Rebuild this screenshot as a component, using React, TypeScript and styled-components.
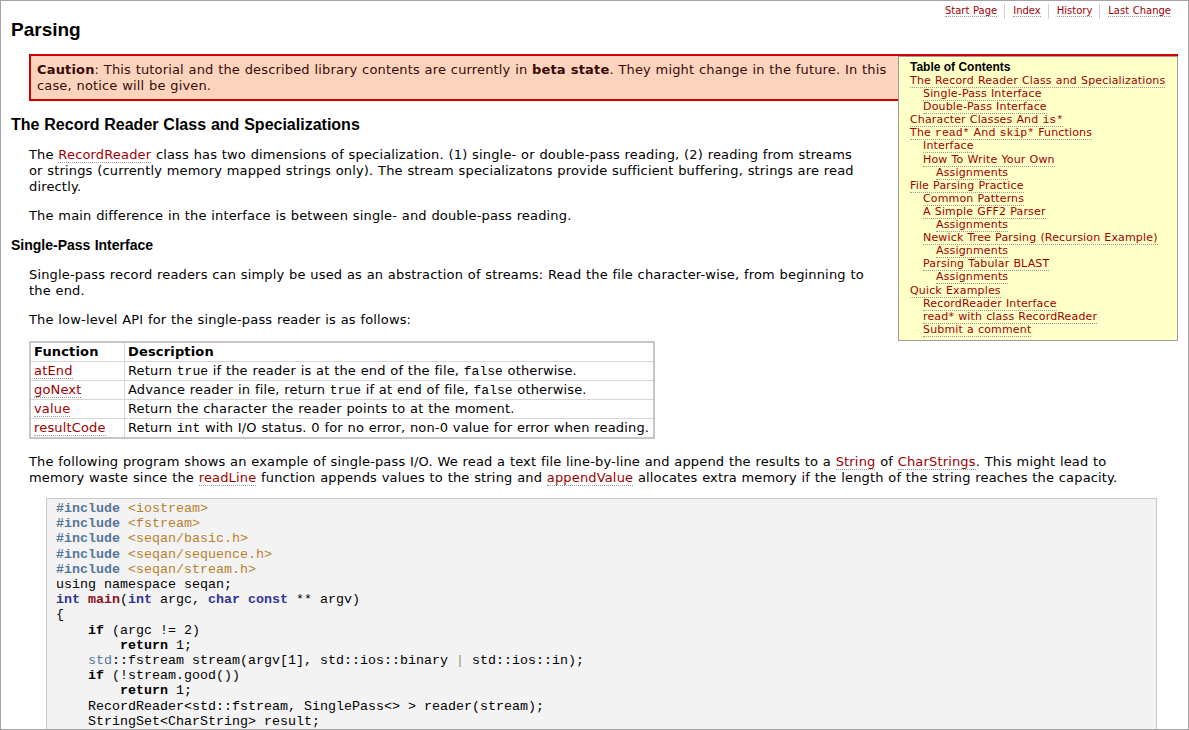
import React from "react";
import styled, { createGlobalStyle } from "styled-components";

const GlobalStyle = createGlobalStyle`
  html, body {
    margin: 0;
    padding: 0;
    background: #fff;
  }
  body {
    font-family: "DejaVu Sans", Verdana, sans-serif;
    font-size: 13px;
    color: #000;
  }
`;

type Kind = "n" | "pp" | "str" | "ty" | "fn" | "kw" | "ns" | "op";

const tokenColors: Record<Kind, string> = {
  n: "#000",
  pp: "#557799",
  str: "#b8812f",
  ty: "#333399",
  fn: "#8b1020",
  kw: "#000",
  ns: "#557799",
  op: "#a09070",
};

const boldKinds: Kind[] = ["pp", "ty", "fn", "kw"];

export default function App() {
  return (
    <>
      <GlobalStyle />
      <Frame>
        <Header>
          <Nav>
            <NavItem>
              <Link href="#">Start Page</Link>
            </NavItem>
            <NavItem>
              <Link href="#">Index</Link>
            </NavItem>
            <NavItem>
              <Link href="#">History</Link>
            </NavItem>
            <NavItem>
              <Link href="#">Last Change</Link>
            </NavItem>
          </Nav>
        </Header>
        <Title>Parsing</Title>
        <Content>
          <Toc>
            <TocTitle>Table of Contents</TocTitle>
            {tocItems.map((item, i) => (
              <TocRow key={i} $level={item.level}>
                <Link href="#">{item.label}</Link>
              </TocRow>
            ))}
          </Toc>
          <Caution>
            <strong>Caution</strong>: This tutorial and the described library
            contents are currently in <strong>beta state</strong>. They might
            change in the future. In this case, notice will be given.
          </Caution>
          <H2>The Record Reader Class and Specializations</H2>
          <Indent $narrow>
            <P>
              The <Link href="#">RecordReader</Link> class has two dimensions
              of specialization. (1) single- or double-pass reading, (2)
              reading from streams or strings (currently memory mapped strings
              only). The stream specializatons provide sufficient buffering,
              strings are read directly.
            </P>
            <P>
              The main difference in the interface is between single- and
              double-pass reading.
            </P>
          </Indent>
          <H3>Single-Pass Interface</H3>
          <Indent $narrow>
            <P>
              Single-pass record readers can simply be used as an abstraction
              of streams: Read the file character-wise, from beginning to the
              end.
            </P>
            <P>The low-level API for the single-pass reader is as follows:</P>
            <Table>
              <thead>
                <tr>
                  <Th $first>Function</Th>
                  <Th>Description</Th>
                </tr>
              </thead>
              <tbody>
                {functions.map((f) => (
                  <tr key={f.name}>
                    <Td>
                      <Link href="#">{f.name}</Link>
                    </Td>
                    <Td>{f.desc}</Td>
                  </tr>
                ))}
              </tbody>
            </Table>
          </Indent>
          <Indent>
            <P $gap={15}>
              The following program shows an example of single-pass I/O. We
              read a text file line-by-line and append the results to a{" "}
              <Link href="#">String</Link> of{" "}
              <Link href="#">CharStrings</Link>. This might lead to memory
              waste since the <Link href="#">readLine</Link> function appends
              values to the string and <Link href="#">appendValue</Link>{" "}
              allocates extra memory if the length of the string reaches the
              capacity.
            </P>
            <CodeBlock>
              {code.map((line, i) => (
                <CodeLine key={i}>
                  {line.map(([kind, text], j) => (
                    <Token key={j} $kind={kind}>
                      {text}
                    </Token>
                  ))}
                </CodeLine>
              ))}
            </CodeBlock>
          </Indent>
        </Content>
      </Frame>
    </>
  );
}

const Frame = styled.div`
  width: 1189px;
  height: 730px;
  box-sizing: border-box;
  border: 1px solid #a3a3a3;
  overflow: hidden;
  background: #fff;
  word-spacing: 0.4px;
  letter-spacing: 0.16px;
`;

const Header = styled.div`
  height: 18px;
  display: flex;
  justify-content: flex-end;
  padding: 3px 10px 0 0;
  box-sizing: border-box;
`;

const Nav = styled.ul`
  display: flex;
  list-style: none;
  margin: 0;
  padding: 0;
  font-size: 10px;
  line-height: 13px;
  letter-spacing: 0;
`;

const NavItem = styled.li`
  padding: 0 7px 0 8px;
  & + & {
    border-left: 1px solid #d0d0d0;
  }
`;

const Link = styled.a`
  color: #a00000;
  text-decoration: none;
  border-bottom: 1px dotted #9a9a9a;
`;

const Title = styled.h1`
  margin: 0;
  padding-left: 10px;
  font-family: "Liberation Sans", Arial, sans-serif;
  font-size: 19px;
  line-height: 22px;
  font-weight: bold;
  letter-spacing: 0;
`;

const Content = styled.div`
  display: flow-root;
  padding: 0 10px;
`;

const Toc = styled.div`
  float: right;
  width: 280px;
  box-sizing: border-box;
  margin: 15px 0 10px 6px;
  padding: 3px 8px 4px 11px;
  border: 1px solid #9c9c9c;
  background: #ffffc8;
  font-size: 11px;
  line-height: 13.1px;
`;

const TocTitle = styled.div`
  font-family: "Liberation Sans", Arial, sans-serif;
  font-size: 12px;
  line-height: 14px;
  font-weight: bold;
  word-spacing: 0;
  letter-spacing: 0;
`;

const TocRow = styled.div<{ $level: number }>`
  padding-left: ${({ $level }) => ($level - 1) * 13}px;
  white-space: nowrap;
`;

const TocMono = styled.span`
  font-family: "Liberation Mono", "Courier New", monospace;
  font-size: 11.5px;
  word-spacing: 0;
  letter-spacing: 0;
  line-height: 11px;
`;

const Caution = styled.div`
  margin: 13px 0 0 18px;
  padding: 6px 6px 5px;
  border: 2px solid #cc0000;
  background: #fcd4bd;
  color: #3a0a0a;
  line-height: 16px;
`;

const H2 = styled.h2`
  margin: 14px 0 0;
  font-family: "Liberation Sans", Arial, sans-serif;
  font-size: 16px;
  line-height: 19px;
  font-weight: bold;
  letter-spacing: 0;
`;

const H3 = styled.h3`
  margin: 13px 0 0;
  font-family: "Liberation Sans", Arial, sans-serif;
  font-size: 14px;
  line-height: 17px;
  font-weight: bold;
  letter-spacing: 0;
`;

const Indent = styled.div<{ $narrow?: boolean }>`
  margin-left: 18px;
  margin-right: ${({ $narrow }) => ($narrow ? "310px" : "21px")};
`;

const P = styled.p<{ $gap?: number }>`
  margin: ${({ $gap }) => $gap ?? 13}px 0 0;
  line-height: 16px;
`;

const Mono = styled.code`
  font-family: "Liberation Mono", "Courier New", monospace;
  font-size: 13px;
  word-spacing: 0;
  letter-spacing: 0;
  line-height: 12px;
`;

const Table = styled.table`
  margin-top: 13px;
  border-collapse: collapse;
  border: 2px solid #c6c6c6;
  line-height: 16px;
`;

const Th = styled.th<{ $first?: boolean }>`
  text-align: left;
  font-weight: bold;
  padding: 1px 4px 1px 3px;
  border: 1px solid #d6d6d6;
  width: ${({ $first }) => ($first ? "86px" : "auto")};
`;

const Td = styled.td`
  padding: 1px 4px 1px 3px;
  border: 1px solid #d6d6d6;
`;

const CodeBlock = styled.pre`
  margin: 12px 0 0 17px;
  padding: 2px 9px;
  border: 1px solid #c8c8c8;
  background: #f3f3f3;
  font-family: "Liberation Mono", "Courier New", monospace;
  font-size: 13.33px;
  line-height: 15.2px;
  word-spacing: 0;
  letter-spacing: 0;
`;

const CodeLine = styled.div`
  white-space: pre;
  min-height: 15.2px;
`;

const Token = styled.span<{ $kind: Kind }>`
  color: ${({ $kind }) => tokenColors[$kind]};
  font-weight: ${({ $kind }) => (boldKinds.includes($kind) ? "bold" : "normal")};
`;

const code: Array<Array<[Kind, string]>> = [
  [["pp", "#include"], ["n", " "], ["str", "<iostream>"]],
  [["pp", "#include"], ["n", " "], ["str", "<fstream>"]],
  [["pp", "#include"], ["n", " "], ["str", "<seqan/basic.h>"]],
  [["pp", "#include"], ["n", " "], ["str", "<seqan/sequence.h>"]],
  [["pp", "#include"], ["n", " "], ["str", "<seqan/stream.h>"]],
  [["n", "using namespace seqan;"]],
  [
    ["ty", "int"],
    ["n", " "],
    ["fn", "main"],
    ["n", "("],
    ["ty", "int"],
    ["n", " argc, "],
    ["ty", "char"],
    ["n", " "],
    ["ty", "const"],
    ["n", " ** argv)"],
  ],
  [["n", "{"]],
  [["n", "    "], ["kw", "if"], ["n", " (argc != 2)"]],
  [["n", "        "], ["kw", "return"], ["n", " 1;"]],
  [
    ["n", "    "],
    ["ns", "std"],
    ["n", "::fstream stream(argv[1], std::ios::binary "],
    ["op", "|"],
    ["n", " std::ios::in);"],
  ],
  [["n", "    "], ["kw", "if"], ["n", " (!stream.good())"]],
  [["n", "        "], ["kw", "return"], ["n", " 1;"]],
  [["n", "    RecordReader<std::fstream, SinglePass<> > reader(stream);"]],
  [["n", "    StringSet<CharString> result;"]],
  [["n", ""]],
  [["n", "    CharString buffer;"]],
  [["n", "    "], ["kw", "while"], ["n", " (!atEnd(reader))"]],
];

type TocItem = { level: number; label: React.ReactNode };

const tocItems: TocItem[] = [
  { level: 1, label: "The Record Reader Class and Specializations" },
  { level: 2, label: "Single-Pass Interface" },
  { level: 2, label: "Double-Pass Interface" },
  {
    level: 1,
    label: (
      <>
        Character Classes And <TocMono>is*</TocMono>
      </>
    ),
  },
  {
    level: 1,
    label: (
      <>
        The <TocMono>read*</TocMono> And <TocMono>skip*</TocMono> Functions
      </>
    ),
  },
  { level: 2, label: "Interface" },
  { level: 2, label: "How To Write Your Own" },
  { level: 3, label: "Assignments" },
  { level: 1, label: "File Parsing Practice" },
  { level: 2, label: "Common Patterns" },
  { level: 2, label: "A Simple GFF2 Parser" },
  { level: 3, label: "Assignments" },
  { level: 2, label: "Newick Tree Parsing (Recursion Example)" },
  { level: 3, label: "Assignments" },
  { level: 2, label: "Parsing Tabular BLAST" },
  { level: 3, label: "Assignments" },
  { level: 1, label: "Quick Examples" },
  { level: 2, label: "RecordReader Interface" },
  { level: 2, label: "read* with class RecordReader" },
  { level: 2, label: "Submit a comment" },
];

const functions: Array<{ name: string; desc: React.ReactNode }> = [
  {
    name: "atEnd",
    desc: (
      <>
        Return <Mono>true</Mono> if the reader is at the end of the file,{" "}
        <Mono>false</Mono> otherwise.
      </>
    ),
  },
  {
    name: "goNext",
    desc: (
      <>
        Advance reader in file, return <Mono>true</Mono> if at end of file,{" "}
        <Mono>false</Mono> otherwise.
      </>
    ),
  },
  {
    name: "value",
    desc: <>Return the character the reader points to at the moment.</>,
  },
  {
    name: "resultCode",
    desc: (
      <>
        Return <Mono>int</Mono> with I/O status. 0 for no error, non-0 value
        for error when reading.
      </>
    ),
  },
];
